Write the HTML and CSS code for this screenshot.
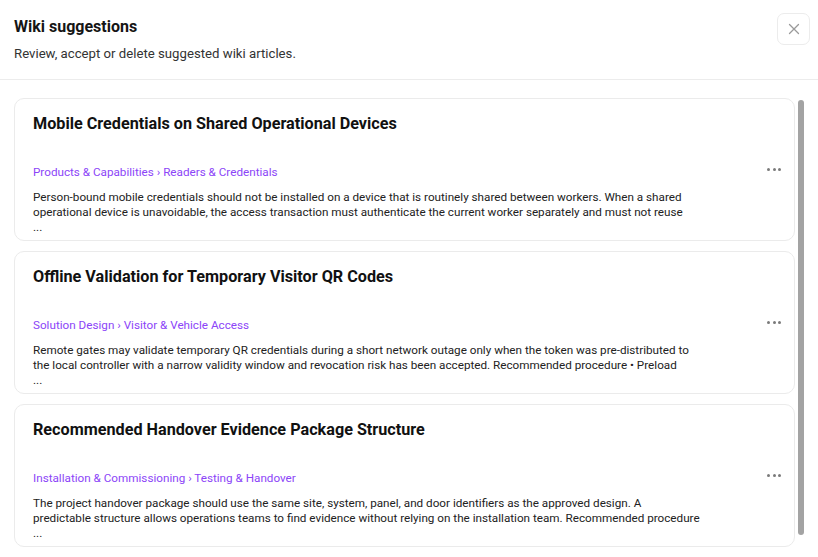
FILE: index.html
```html
<!DOCTYPE html>
<html lang="en">
<head>
<meta charset="utf-8">
<title>Wiki suggestions</title>
<link rel="stylesheet" href="styles.css">
</head>
<body>
<div class="dialog">
  <header class="dialog-header">
    <div class="heading">
      <h1 class="dialog-title">Wiki suggestions</h1>
      <p class="dialog-subtitle">Review, accept or delete suggested wiki articles.</p>
    </div>
    <button class="close-btn" aria-label="Close">
      <svg width="12" height="12" viewBox="0 0 12 12"><path d="M1.5 1.5 L10.5 10.5 M10.5 1.5 L1.5 10.5" stroke="#9a9a9a" stroke-width="1.3" stroke-linecap="round"/></svg>
    </button>
  </header>
  <div class="list-area">
    <div class="cards">
      <article class="card">
        <div class="card-body">
          <h2 class="card-title">Mobile Credentials on Shared Operational Devices</h2>
          <div class="crumb">Products &amp; Capabilities › Readers &amp; Credentials</div>
          <p class="desc">Person-bound mobile credentials should not be installed on a device that is routinely shared between workers. When a shared operational device is unavoidable, the access transaction must authenticate the current worker separately and must not reuse<br>...</p>
        </div>
        <button class="menu-btn" aria-label="More"><span></span><span></span><span></span></button>
      </article>
      <article class="card">
        <div class="card-body">
          <h2 class="card-title">Offline Validation for Temporary Visitor QR Codes</h2>
          <div class="crumb">Solution Design › Visitor &amp; Vehicle Access</div>
          <p class="desc">Remote gates may validate temporary QR credentials during a short network outage only when the token was pre-distributed to the local controller with a narrow validity window and revocation risk has been accepted. Recommended procedure • Preload<br>...</p>
        </div>
        <button class="menu-btn" aria-label="More"><span></span><span></span><span></span></button>
      </article>
      <article class="card">
        <div class="card-body">
          <h2 class="card-title">Recommended Handover Evidence Package Structure</h2>
          <div class="crumb">Installation &amp; Commissioning › Testing &amp; Handover</div>
          <p class="desc">The project handover package should use the same site, system, panel, and door identifiers as the approved design. A<br>predictable structure allows operations teams to find evidence without relying on the installation team. Recommended procedure<br>...</p>
        </div>
        <button class="menu-btn" aria-label="More"><span></span><span></span><span></span></button>
      </article>
    </div>
    <div class="scroll-track"><div class="scroll-thumb"></div></div>
  </div>
</div>
</body>
</html>
```

FILE: styles.css
```css
* { box-sizing: border-box; }
html, body {
  margin: 0;
  padding: 0;
  height: 100%;
  overflow: hidden;
  background: #fff;
}
body {
  font-family: Roboto, "Liberation Sans", Arial, sans-serif;
  color: #1a1a1a;
}
.dialog {
  display: flex;
  flex-direction: column;
  height: 557px;
}
.dialog-header {
  display: flex;
  justify-content: space-between;
  align-items: flex-start;
  padding: 13px 8px 0 14px;
  height: 80px;
  border-bottom: 1px solid #ececec;
}
.dialog-title {
  margin: 4px 0 0;
  font-size: 16px;
  line-height: 20px;
  font-weight: 700;
  color: #151515;
}
.dialog-subtitle {
  margin: 8px 0 0;
  font-size: 13.2px;
  line-height: 18px;
  color: #333;
}
.close-btn {
  width: 33px;
  height: 32px;
  border: 1px solid #ececec;
  border-radius: 7px;
  background: #fff;
  display: flex;
  align-items: center;
  justify-content: center;
  padding: 0;
}
.list-area {
  display: flex;
  flex: 1;
  padding: 18px 14px 0 14px;
  gap: 3px;
  min-height: 0;
}
.cards {
  flex: 1;
  display: flex;
  flex-direction: column;
  gap: 10px;
}
.card {
  display: flex;
  align-items: center;
  height: 143px;
  flex-shrink: 0;
  border: 1px solid #ebebeb;
  border-radius: 10px;
  padding: 0 6px 0 18px;
}
.card-body {
  flex: 1;
  align-self: flex-start;
  padding-top: 13px;
}
.card-title {
  margin: 0;
  font-size: 16.2px;
  line-height: 24px;
  font-weight: 700;
  color: #111;
}
.crumb {
  margin-top: 28px;
  font-size: 11.7px;
  line-height: 16px;
  color: #8c45f8;
}
.desc {
  margin: 10px 0 0;
  max-width: 672px;
  font-size: 11.7px;
  line-height: 15px;
  color: #222;
}
.menu-btn {
  width: 28px;
  height: 24px;
  border: 0;
  background: transparent;
  display: flex;
  align-items: center;
  justify-content: center;
  gap: 2.5px;
  padding: 0;
}
.menu-btn span {
  width: 3px;
  height: 3px;
  border-radius: 50%;
  background: #7a7a7a;
}
.scroll-track {
  width: 6px;
  padding-top: 2px;
}
.scroll-thumb {
  width: 6px;
  height: 435px;
  border-radius: 3px;
  background: #a3a3a3;
}
```
